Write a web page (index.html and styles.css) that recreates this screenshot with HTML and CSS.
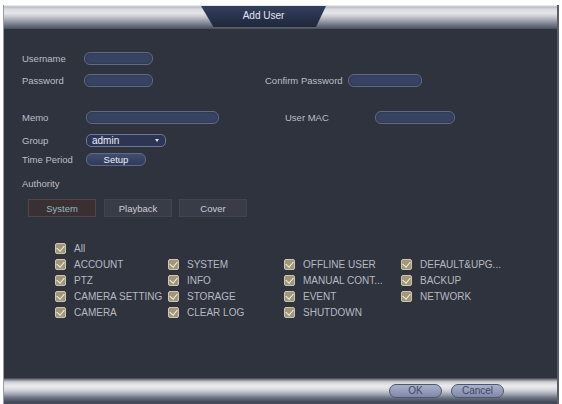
FILE: index.html
```html
<!DOCTYPE html>
<html>
<head>
<meta charset="utf-8">
<link rel="stylesheet" href="styles.css">
</head>
<body>
<div class="window">
  <div class="titlebar">
    <div class="title-tab">Add User</div>
  </div>
  <div class="content">
    <div class="row r1">
      <span class="label">Username</span><span class="input w69"></span>
    </div>
    <div class="row r2">
      <div class="left l243"><span class="label">Password</span><span class="input w69"></span></div>
      <span class="label-r">Confirm Password</span><span class="input w74"></span>
    </div>
    <div class="row r3">
      <div class="left l263"><span class="label">Memo</span><span class="input w133 ml2"></span></div>
      <span class="label-r wmac">User MAC</span><span class="input w80"></span>
    </div>
    <div class="row r4">
      <span class="label">Group</span><span class="select ml2">admin<span class="arrow"></span></span>
    </div>
    <div class="row r5">
      <span class="label">Time Period</span><span class="btn ml2">Setup</span>
    </div>
    <div class="row r6">
      <span class="label">Authority</span>
    </div>
    <div class="tabs">
      <span class="tab active">System</span>
      <span class="tab">Playback</span>
      <span class="tab">Cover</span>
    </div>
    <div class="checks">
      <div class="crow"><span class="ci"><span class="cb"></span>All</span></div>
      <div class="crow">
        <span class="ci c1"><span class="cb"></span>ACCOUNT</span>
        <span class="ci c2"><span class="cb"></span>SYSTEM</span>
        <span class="ci c3"><span class="cb"></span>OFFLINE USER</span>
        <span class="ci"><span class="cb"></span>DEFAULT&amp;UPG...</span>
      </div>
      <div class="crow">
        <span class="ci c1"><span class="cb"></span>PTZ</span>
        <span class="ci c2"><span class="cb"></span>INFO</span>
        <span class="ci c3"><span class="cb"></span>MANUAL CONT...</span>
        <span class="ci"><span class="cb"></span>BACKUP</span>
      </div>
      <div class="crow">
        <span class="ci c1"><span class="cb"></span>CAMERA SETTING</span>
        <span class="ci c2"><span class="cb"></span>STORAGE</span>
        <span class="ci c3"><span class="cb"></span>EVENT</span>
        <span class="ci"><span class="cb"></span>NETWORK</span>
      </div>
      <div class="crow">
        <span class="ci c1"><span class="cb"></span>CAMERA</span>
        <span class="ci c2"><span class="cb"></span>CLEAR LOG</span>
        <span class="ci c3"><span class="cb"></span>SHUTDOWN</span>
      </div>
    </div>
  </div>
  <div class="footer">
    <span class="fbtn">OK</span>
    <span class="fbtn">Cancel</span>
  </div>
</div>
</body>
</html>
```
FILE: styles.css
```css
html, body {
  margin: 0;
  padding: 0;
  background: #ffffff;
}
body {
  font-family: "Liberation Sans", Arial, sans-serif;
  font-size: 9.5px;
  color: #bfc2ca;
}
.window {
  margin: 5px 0 0 3px;
  width: 556px;
  height: 399px;
  display: flex;
  flex-direction: column;
  background: #2f333e;
  border-left: 1px solid #9a9ca4;
  border-right: 2px solid #5a5e6a;
  box-sizing: border-box;
}
.titlebar {
  height: 24px;
  flex: none;
  display: flex;
  justify-content: flex-start;
  background: linear-gradient(to bottom, #f4f4f6 0px, #b8bac2 2px, #d8d9de 4px, #e6e6ea 8px, #c4c6cc 12px, #9a9eaa 16px, #707686 20px, #4a4f5e 24px);
}
.title-tab {
  margin-left: 197px;
  margin-top: 1px;
  width: 125px;
  height: 21px;
  clip-path: polygon(0 0, 100% 0, 92% 100%, 10% 100%);
  background: linear-gradient(to bottom, #33405e, #263049 60%, #1f2739);
  color: #e4e6ec;
  text-align: center;
  line-height: 19px;
  font-size: 10px;
}
.content {
  flex: 1;
  padding: 23px 0 0 18px;
}
.row {
  display: flex;
  align-items: center;
  height: 13px;
}
.r2 { margin-top: 9px; }
.r3 { margin-top: 24px; }
.r4 { margin-top: 10px; }
.r5 { margin-top: 6px; }
.r6 { margin-top: 11px; }
.left {
  display: flex;
  align-items: center;
}
.l243 { width: 243px; }
.l263 { width: 263px; }
.label {
  width: 62px;
  flex: none;
  color: #bcbfc7;
}
.label-r {
  width: 83px;
  flex: none;
  color: #bcbfc7;
}
.wmac { width: 90px; }
.input {
  height: 11px;
  border: 1px solid #5f6a86;
  border-radius: 6px;
  background: #374361;
  box-shadow: inset 0 0 2px #222a40;
}
.w69 { width: 67px; }
.w74 { width: 72px; }
.w80 { width: 78px; }
.w133 { width: 131px; }
.ml2 { margin-left: 2px; }
.select {
  position: relative;
  height: 11px;
  border: 1px solid #6e7892;
  border-radius: 5px;
  background: #2c3654;
  color: #eef0f4;
  padding-left: 5px;
  line-height: 11px;
  width: 73px;
  font-size: 10px;
}
.arrow {
  position: absolute;
  right: 6px;
  top: 4px;
  border-left: 2.5px solid transparent;
  border-right: 2.5px solid transparent;
  border-top: 3px solid #dfe2ea;
}
.btn {
  width: 58px;
  height: 11px;
  border: 1px solid #5f6a86;
  border-radius: 6px;
  background: linear-gradient(to bottom, #414d70, #303b5a);
  color: #eef0f4;
  text-align: center;
  line-height: 11px;
}
.tabs {
  display: flex;
  margin-top: 9px;
  margin-left: 6px;
  gap: 8px;
}
.tab {
  height: 18px;
  width: 68px;
  line-height: 18px;
  text-align: center;
  background: #393c46;
  color: #cbced5;
  border: 1px solid #42454e;
  box-sizing: border-box;
}
.tab + .tab + .tab { margin-left: -1px; }
.tab.active {
  background: #3a3034;
  border-color: #4e464b;
  color: #90b8c6;
}
.checks {
  margin-top: 23px;
  margin-left: 33px;
}
.crow {
  display: flex;
  height: 16px;
  align-items: center;
}
.ci {
  display: flex;
  align-items: center;
  color: #b6b9c2;
  white-space: nowrap;
  font-size: 10px;
}
.c1 { width: 113px; }
.c2 { width: 116px; }
.c3 { width: 117px; }
.cb {
  width: 9px;
  height: 9px;
  margin-right: 8px;
  border: 1px solid #cfc7ac;
  border-radius: 2px;
  background: #a2967a;
  position: relative;
  flex: none;
}
.cb::after {
  content: "";
  position: absolute;
  left: 2px;
  top: 0px;
  width: 4px;
  height: 6px;
  border-right: 1.5px solid #f2efe6;
  border-bottom: 1.5px solid #f2efe6;
  transform: rotate(40deg);
}
.footer {
  height: 26px;
  flex: none;
  display: flex;
  align-items: center;
  justify-content: flex-end;
  gap: 9px;
  padding-right: 53px;
  background: linear-gradient(to bottom, #3a3f4c 0px, #8a8e9a 2px, #cfd0d6 4px, #ececef 8px, #d4d6dc 12px, #a4a8b4 16px, #6a7080 20px, #454a5a 24px);
}
.fbtn {
  width: 51px;
  height: 12px;
  border: 1px solid #4e5670;
  border-radius: 7px;
  background: linear-gradient(to bottom, #aab2ca, #8088a8);
  color: #3e4868;
  text-align: center;
  line-height: 12px;
  font-size: 10px;
}
```
